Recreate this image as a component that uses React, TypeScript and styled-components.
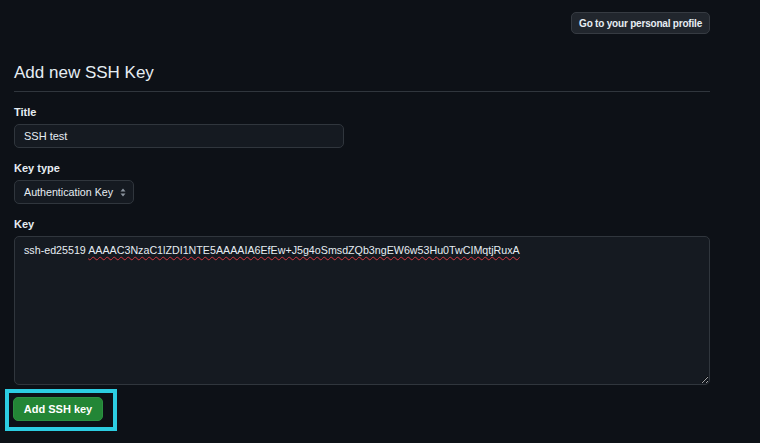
import React from "react";
import styled, { createGlobalStyle } from "styled-components";

const GlobalStyle = createGlobalStyle`
  html, body {
    margin: 0;
    padding: 0;
    background: #0d1117;
    color-scheme: dark;
  }
  body {
    font-family: "Liberation Sans", Arial, sans-serif;
    color: #e6edf3;
  }
`;

const KEY_PREFIX = "ssh-ed25519";
const KEY_BODY = "AAAAC3NzaC1lZDI1NTE5AAAAIA6EfEw+J5g4oSmsdZQb3ngEW6w53Hu0TwCIMqtjRuxA";

function App() {
  const [title, setTitle] = React.useState("SSH test");

  return (
    <Page>
      <GlobalStyle />
      <TopBar>
        <GhostButton type="button">Go to your personal profile</GhostButton>
      </TopBar>

      <Subhead>
        <Heading>Add new SSH Key</Heading>
      </Subhead>

      <FormGroup>
        <Label htmlFor="ssh-title">Title</Label>
        <TextInput
          id="ssh-title"
          value={title}
          onChange={(e) => setTitle(e.target.value)}
        />
      </FormGroup>

      <FormGroup>
        <Label>Key type</Label>
        <SelectBox>
          <span>Authentication Key</span>
          <svg width="6" height="9" viewBox="0 0 6 9" aria-hidden="true">
            <path d="M3 0.5 L5.5 3.5 H0.5 Z" fill="#8b949e" />
            <path d="M3 8.5 L5.5 5.5 H0.5 Z" fill="#8b949e" />
          </svg>
        </SelectBox>
      </FormGroup>

      <FormGroup>
        <Label>Key</Label>
        <KeyArea>
          {KEY_PREFIX} <Misspelled>{KEY_BODY}</Misspelled>
        </KeyArea>
      </FormGroup>

      <Highlight>
        <PrimaryButton type="button">Add SSH key</PrimaryButton>
      </Highlight>
    </Page>
  );
}

const Page = styled.div`
  width: 696px;
  padding: 12px 50px 0 14px;
`;

const TopBar = styled.div`
  display: flex;
  justify-content: flex-end;
`;

const GhostButton = styled.button`
  height: 22px;
  padding: 0 7px;
  background: #21262d;
  border: 1px solid #363b42;
  border-radius: 5px;
  color: #e6edf3;
  font-family: inherit;
  font-size: 10px;
  letter-spacing: -0.2px;
  font-weight: 700;
  cursor: pointer;
`;

const Subhead = styled.div`
  margin-top: 27px;
  padding-bottom: 6px;
  border-bottom: 1px solid #30363d;
`;

const Heading = styled.h2`
  margin: 0;
  font-size: 17px;
  line-height: 24px;
  font-weight: 400;
  color: #e6edf3;
`;

const FormGroup = styled.div`
  display: flex;
  flex-direction: column;
  align-items: flex-start;
  margin-top: 12px;
`;

const Label = styled.label`
  font-size: 11px;
  line-height: 16px;
  font-weight: 700;
  color: #e6edf3;
  margin-bottom: 4px;
`;

const TextInput = styled.input`
  box-sizing: border-box;
  width: 330px;
  height: 24px;
  padding: 0 9px;
  background: #151a21;
  border: 1px solid #30363d;
  border-radius: 5px;
  color: #e6edf3;
  font-family: inherit;
  font-size: 11px;
  outline: none;
`;

const SelectBox = styled.div`
  box-sizing: border-box;
  height: 24px;
  display: flex;
  align-items: center;
  gap: 7px;
  padding: 0 7px 0 9px;
  background: #151a21;
  border: 1px solid #30363d;
  border-radius: 5px;
  font-size: 10.7px;
  color: #e6edf3;
`;

const KeyArea = styled.div`
  box-sizing: border-box;
  width: 696px;
  height: 149px;
  padding: 5px 9px;
  background: #151a21;
  border: 1px solid #30363d;
  border-radius: 5px;
  font-size: 10.7px;
  line-height: 16px;
  color: #e6edf3;
  overflow: auto;
  resize: vertical;
  word-break: break-all;
`;

const Misspelled = styled.span`
  text-decoration: underline wavy #d4363f;
  text-decoration-thickness: 1px;
  text-underline-offset: 2px;
`;

const Highlight = styled.div`
  display: inline-flex;
  margin: 4px 0 0 -9px;
  padding: 4px 10px 6px 4px;
  border: 4px solid #2ccde2;
`;

const PrimaryButton = styled.button`
  width: 90px;
  height: 24px;
  background: #238636;
  border: 1px solid #2a9141;
  border-radius: 5px;
  color: #ffffff;
  font-family: inherit;
  font-size: 11px;
  font-weight: 700;
  cursor: pointer;
`;

export default App;
